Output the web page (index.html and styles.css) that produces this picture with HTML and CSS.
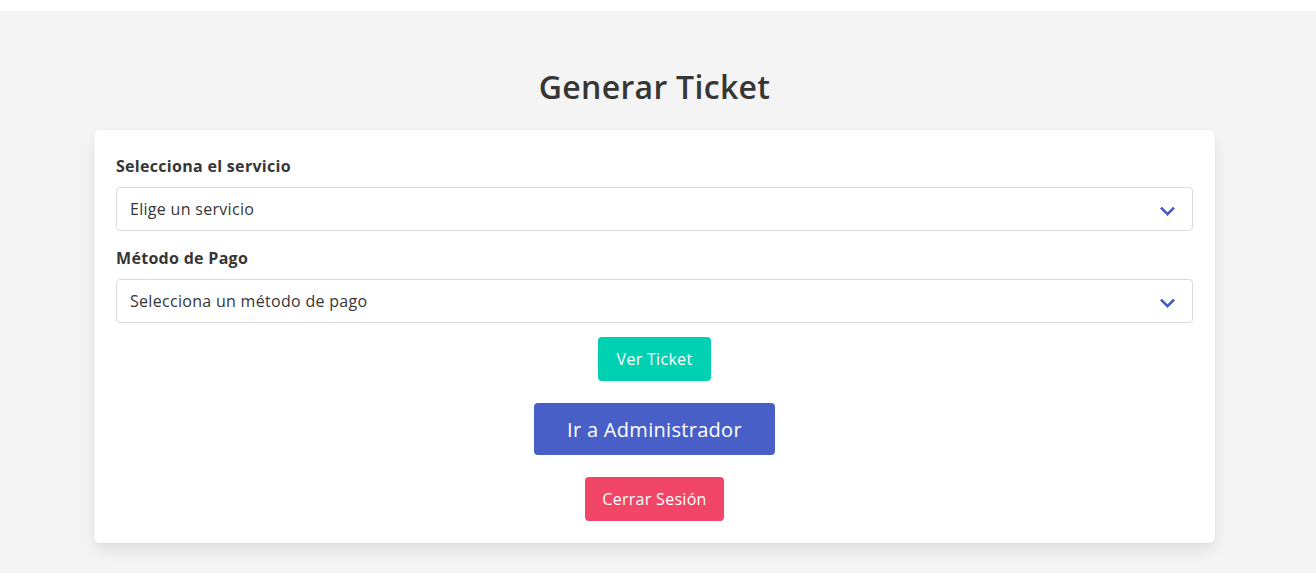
FILE: index.html
```html
<!DOCTYPE html>
<html lang="es">
<head>
<meta charset="utf-8">
<title>Generar Ticket</title>
<link rel="stylesheet" href="styles.css">
</head>
<body>
<div class="topbar"></div>
<main class="section">
  <div class="container">
    <h1 class="title">Generar Ticket</h1>
    <form class="box">
      <div class="field">
        <label class="label">Selecciona el servicio</label>
        <div class="select">
          <select>
            <option>Elige un servicio</option>
          </select>
        </div>
      </div>
      <div class="field field-last">
        <label class="label">Método de Pago</label>
        <div class="select">
          <select>
            <option>Selecciona un método de pago</option>
          </select>
        </div>
      </div>
      <div class="actions">
        <button type="button" class="button is-primary">Ver Ticket</button>
        <button type="button" class="button is-link is-medium">Ir a Administrador</button>
        <button type="button" class="button is-danger">Cerrar Sesión</button>
      </div>
    </form>
  </div>
</main>
</body>
</html>
```
FILE: styles.css
```css
* { box-sizing: border-box; }
html, body { margin: 0; padding: 0; }
body {
  background: #ffffff;
  font-family: "Open Sans", "Noto Sans", sans-serif;
  color: #363636;
  font-size: 16px;
  letter-spacing: 0.3px;
}
.topbar { height: 11px; background: #ffffff; }
.section {
  background: #f4f4f4;
  min-height: 562px;
  padding: 58px 0 30px;
}
.container {
  width: 1121px;
  margin-left: 94px;
}
.title {
  margin: 0 0 25px;
  text-align: center;
  font-size: 32px;
  line-height: 36px;
  font-weight: 600;
  color: #363636;
}
.box {
  background: #ffffff;
  border-radius: 6px;
  box-shadow: 0 8px 16px -2px rgba(10,10,10,0.1), 0 0 0 1px rgba(10,10,10,0.02);
  padding: 24px 22px 22px;
}
.field { margin-bottom: 15px; }
.field.field-last { margin-bottom: 14px; }
.label {
  display: block;
  font-weight: 700;
  font-size: 16px;
  line-height: 24px;
  margin-bottom: 9px;
  color: #363636;
}
.select { position: relative; }
.select select {
  display: block;
  width: 100%;
  height: 44px;
  appearance: none;
  -webkit-appearance: none;
  background: #ffffff;
  border: 1px solid #dbdbdb;
  border-radius: 4px;
  padding: 0 40px 0 13px;
  font-family: inherit;
  font-size: 16px;
  letter-spacing: inherit;
  color: #363636;
}
.select::after {
  content: "";
  position: absolute;
  right: 20px;
  top: 16px;
  width: 8px;
  height: 8px;
  border: 3px solid #485fc7;
  border-right: 0;
  border-top: 0;
  border-radius: 1px;
  transform: rotate(-45deg);
  pointer-events: none;
}
.actions {
  display: flex;
  flex-direction: column;
  align-items: center;
  gap: 22px;
}
.button {
  border: 0;
  border-radius: 4px;
  color: #ffffff;
  font-family: inherit;
  letter-spacing: inherit;
  font-size: 16px;
  height: 44px;
  padding: 0 18px;
  cursor: pointer;
}
.button.is-primary { padding: 0 19px; }
.button.is-danger { padding: 0 17px; }
.button.is-medium {
  font-size: 20px;
  height: 52px;
  padding: 0 33px;
}
.is-primary { background: #00d1b2; }
.is-link { background: #485fc7; }
.is-danger { background: #f14668; }
```
